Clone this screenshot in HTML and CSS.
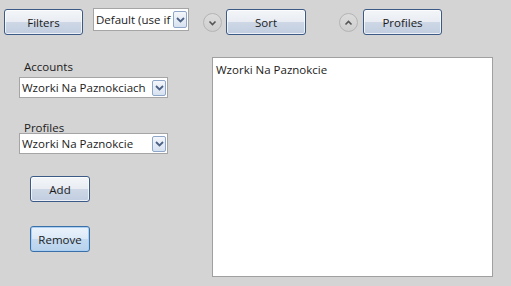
FILE: index.html
```html
<html>
  <head>
    <title>Profiles</title>
    <meta charset="utf-8" />
    <link rel="stylesheet" href="styles.css">
  </head>
  <body>
    <div class="top">
      <button class="btn btn-filters">Filters</button>
      <div class="combo combo-sort">
        <span class="combo-text">Default (use if</span>
        <span class="drop">
          <svg width="9" height="6" viewBox="0 0 9 6"><polyline points="1,1 4.5,4.5 8,1" fill="none" stroke="#4d6185" stroke-width="1.8"/></svg>
        </span>
      </div>
      <span class="circle circle-down">
        <svg width="9" height="6" viewBox="0 0 9 6"><polyline points="1.5,1.5 4.5,4.5 7.5,1.5" fill="none" stroke="#555" stroke-width="1.6"/></svg>
      </span>
      <button class="btn btn-sort">Sort</button>
      <span class="circle circle-up">
        <svg width="9" height="6" viewBox="0 0 9 6"><polyline points="1.5,4.5 4.5,1.5 7.5,4.5" fill="none" stroke="#555" stroke-width="1.6"/></svg>
      </span>
      <button class="btn btn-profiles">Profiles</button>
    </div>

    <div class="main">
      <div class="side">
        <label class="lbl lbl-accounts">Accounts</label>
        <div class="combo combo-wide">
          <span class="combo-text">Wzorki Na Paznokciach</span>
          <span class="drop">
            <svg width="9" height="6" viewBox="0 0 9 6"><polyline points="1,1 4.5,4.5 8,1" fill="none" stroke="#4d6185" stroke-width="1.8"/></svg>
          </span>
        </div>
        <label class="lbl lbl-profiles">Profiles</label>
        <div class="combo combo-wide">
          <span class="combo-text">Wzorki Na Paznokcie</span>
          <span class="drop">
            <svg width="9" height="6" viewBox="0 0 9 6"><polyline points="1,1 4.5,4.5 8,1" fill="none" stroke="#4d6185" stroke-width="1.8"/></svg>
          </span>
        </div>
        <button class="btn btn-small btn-add">Add</button>
        <button class="btn btn-small btn-remove">Remove</button>
      </div>
      <div class="list">
        <div class="item">Wzorki Na Paznokcie</div>
      </div>
    </div>
  </body>
</html>
```

FILE: styles.css
```css
body {
  margin: 0;
  background: #d4d4d4;
  width: 511px;
  height: 286px;
  overflow: hidden;
}

body,
* {
  font-family: "Open Sans", "Noto Sans", sans-serif;
  font-size: 11.5px;
  color: #1b1b1b;
}

.top {
  display: flex;
  align-items: flex-start;
  box-sizing: border-box;
  height: 57px;
  padding: 9px 0 0 4px;
}

.btn {
  box-sizing: border-box;
  height: 26px;
  padding: 0;
  border: 1px solid #3c5a86;
  border-radius: 3px;
  background: linear-gradient(#f3f5f8 0%, #e9edf3 48%, #cdd7e5 52%, #c1cde0 100%);
  box-shadow: inset 0 0 0 1px rgba(255, 255, 255, 0.7);
  line-height: 23px;
  text-align: center;
}

.btn-filters {
  width: 79px;
}

.btn-sort {
  width: 80px;
  margin-left: 4px;
}

.btn-profiles {
  width: 79px;
  margin-left: 5px;
}

.combo {
  display: flex;
  align-items: center;
  box-sizing: border-box;
  background: #fff;
  border: 1px solid #a5a5a5;
}

.combo-text {
  flex: 1;
  padding-left: 2px;
  white-space: nowrap;
  overflow: hidden;
}

.combo-sort {
  width: 96px;
  height: 23px;
  margin: -1px 0 0 10px;
}

.drop {
  display: flex;
  align-items: center;
  justify-content: center;
  box-sizing: border-box;
  flex: none;
  width: 14px;
  height: 17px;
  margin-right: 1px;
  border: 1px solid #8ea6c8;
  border-radius: 2px;
  background: linear-gradient(#f4f7fb, #d7e2f0);
}

.circle {
  display: flex;
  align-items: center;
  justify-content: center;
  box-sizing: border-box;
  width: 19px;
  height: 19px;
  margin-top: 4px;
  border: 1px solid #b4b4b4;
  border-radius: 50%;
  background: linear-gradient(#dcdcdc, #cfcfcf);
}

.circle-down {
  margin-left: 14px;
}

.circle-up {
  margin-left: 33px;
}

.main {
  display: flex;
}

.side {
  display: flex;
  flex-direction: column;
  align-items: flex-start;
  box-sizing: border-box;
  width: 212px;
  padding-left: 19px;
}

.lbl {
  display: block;
  padding-left: 5px;
  line-height: 16px;
}

.lbl-accounts {
  margin-top: 2px;
}

.lbl-profiles {
  margin-top: 22px;
  margin-bottom: -5px;
}

.combo-wide {
  width: 149px;
  height: 21px;
  margin-top: 2px;
}

.combo-wide .drop {
  height: 16px;
}

.btn-small {
  width: 60px;
  margin-left: 11px;
}

.btn-add {
  margin-top: 22px;
}

.btn-remove {
  margin-top: 24px;
  border-color: #3a6fa8;
  background: linear-gradient(#eaf3fc 0%, #dbe9f7 48%, #c4daf0 52%, #b9d2ec 100%);
  box-shadow: inset 0 0 0 1px #a9d0f2;
}

.list {
  box-sizing: border-box;
  width: 281px;
  height: 220px;
  background: #fff;
  border: 1px solid #a0a0a0;
  padding: 3px 3px;
}

.item {
  line-height: 17px;
}
```
